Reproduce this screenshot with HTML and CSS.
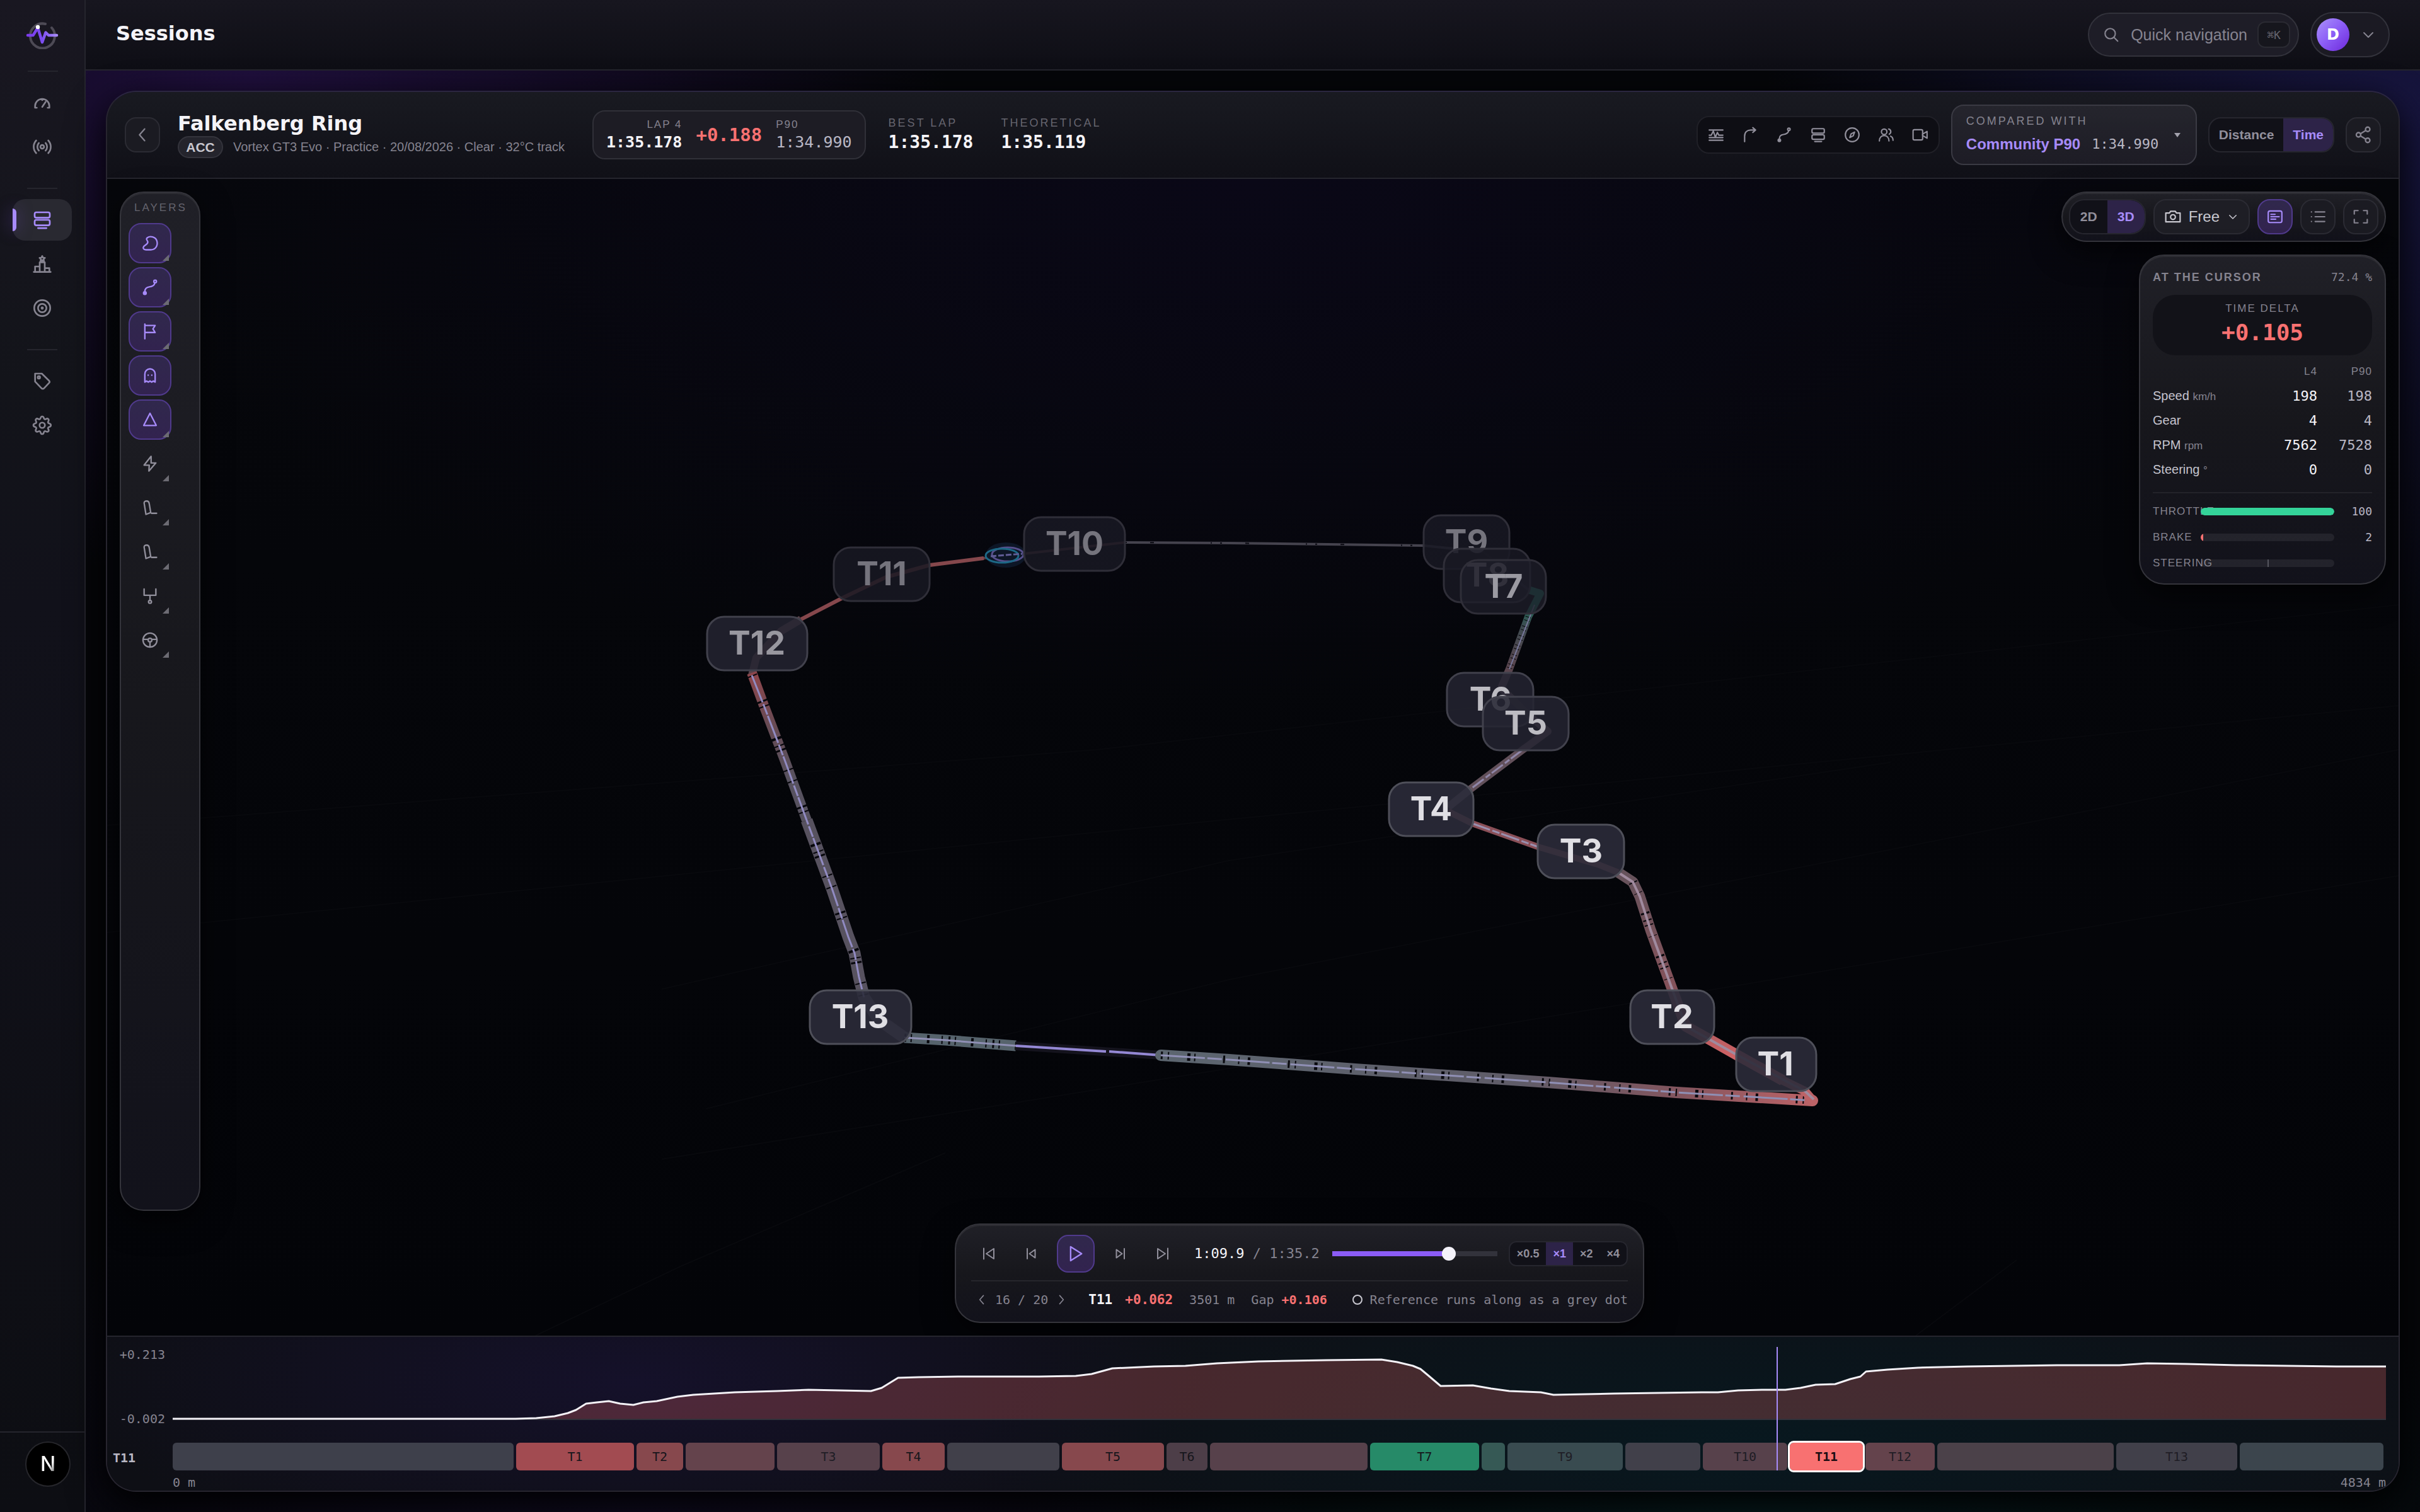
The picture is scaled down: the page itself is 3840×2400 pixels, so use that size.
FILE: index.html
```html
<!DOCTYPE html>
<html lang="en">
<head>
  <meta charset="UTF-8">
  <meta name="viewport" content="width=device-width, initial-scale=1.0">
  <title>Sessions - Falkenberg Ring</title>
  <link rel="stylesheet" href="styles.css">
</head>
<body>
  <!-- Shared icons -->
  <svg class="sprite" aria-hidden="true">
    <symbol id="i-stack" viewBox="0 0 24 24"><rect x="3" y="3" width="18" height="6.500" rx="2"/><rect x="3" y="12" width="18" height="6.500" rx="2"/><path d="M7 21.800h10"/></symbol>
    <symbol id="i-line" viewBox="0 0 24 24"><circle cx="5" cy="20" r="1.800" fill="currentColor"/><circle cx="19" cy="4" r="1.800"/><path d="M5 18c0-4 2-6 6-6.500s7-1.500 7.600-5.500"/></symbol>
    <symbol id="i-pedal" viewBox="0 0 24 24"><path d="M4 5.500C4 3.500 5.500 2.800 7.500 2.800S10.600 4 10.900 6L13 18.500 6.500 21z"/><path d="M14 19.500h7"/></symbol>
    <symbol id="i-down" viewBox="0 0 24 24"><path d="m5 9 7 7 7-7"/></symbol>
    <symbol id="i-left" viewBox="0 0 24 24"><path d="m15 4-7 8 7 8"/></symbol>
    <symbol id="i-right" viewBox="0 0 24 24"><path d="m9 4 7 8-7 8"/></symbol>
  </svg>

  <div class="app">
    <aside class="sidebar">
      <a class="logo" href="#" aria-label="Home">
        <svg viewBox="0 0 52 44" fill="none" stroke-linecap="round" stroke-linejoin="round">
          <defs><linearGradient id="pulse"><stop offset="0" stop-color="#7c3aed"/><stop offset="0.500" stop-color="#7c4df0"/><stop offset="1" stop-color="#a78bfa"/></linearGradient></defs>
          <path d="M31 4A19.500 19.500 0 1 0 41 10" stroke="#4d4a55" stroke-width="4"/>
          <path d="M3 22h8.500L19 10l7 23 5.500-15.500L36 22h13" stroke="url(#pulse)" stroke-width="4.500"/>
          <circle cx="19" cy="9" r="3.200" fill="#fff"/>
        </svg>
      </a>
      <nav class="nav">
        <a class="nav-item" href="#" aria-label="Dashboard"><svg class="icon" viewBox="0 0 24 24"><path d="M3.500 18v-2a8.500 8.500 0 0 1 17 0v2M3.500 18h2M20.500 18h-2M12 17l4-6M12 7.500V9"/></svg></a>
        <a class="nav-item" href="#" aria-label="Live"><svg class="icon" viewBox="0 0 24 24"><circle cx="12" cy="12" r="2.200"/><path d="M8 7.500a6.500 6.500 0 0 0 0 9M16 7.500a6.500 6.500 0 0 1 0 9M4.800 4.500a11 11 0 0 0 0 15M19.200 4.500a11 11 0 0 1 0 15"/></svg></a>
        <hr>
        <a class="nav-item active" href="#" aria-label="Sessions"><svg class="icon"><use href="#i-stack"/></svg></a>
        <a class="nav-item" href="#" aria-label="Leaderboard"><svg class="icon" viewBox="0 0 24 24"><path d="M2 21.500h20M3.500 21.500V15H9M9 21.500V10h6v11.500M15 17h5.500v4.500"/><path d="m12 2.500 1 2 2.200.300-1.600 1.500.400 2.200-2-1-2 1 .400-2.200-1.600-1.500 2.200-.300z"/></svg></a>
        <a class="nav-item" href="#" aria-label="Targets"><svg class="icon" viewBox="0 0 24 24"><circle cx="12" cy="12" r="9.500"/><circle cx="12" cy="12" r="5"/><circle cx="12" cy="12" r="0.800"/></svg></a>
        <hr>
        <a class="nav-item" href="#" aria-label="Setups"><svg class="icon" viewBox="0 0 24 24"><path d="M3.500 3h8l8.600 8.400a2 2 0 0 1 0 2.800l-6 6.300a2 2 0 0 1-2.900 0L3.500 12.500z"/><circle cx="8" cy="7.500" r="1.400"/></svg></a>
        <a class="nav-item" href="#" aria-label="Settings"><svg class="icon" viewBox="0 0 24 24"><circle cx="12" cy="12" r="3.200"/><path d="M12 1.500c1.600 0 1.700 1 2 2.200.300 1.100 1.300 1.500 2.200 1 1.100-.600 1.900-1.200 3-.100s.500 1.900-.100 3c-.500.900-.100 1.900 1 2.200 1.200.300 2.200.600 2.200 2.200s-1 1.800-2.200 2.100c-1.100.300-1.500 1.300-1 2.200.600 1.100 1.200 1.900.1 3s-1.900.5-3-.1c-.9-.5-1.900-.1-2.200 1-.3 1.200-.4 2.300-2 2.300s-1.800-1.100-2.100-2.300c-.3-1.100-1.300-1.500-2.200-1-1.100.6-1.900 1.200-3 .1s-.5-1.900.1-3c.5-.9.1-1.900-1-2.200C2.600 13.800 1.500 13.600 1.500 12s1.100-1.900 2.300-2.200c1.100-.3 1.500-1.300 1-2.200-.6-1.100-1.200-1.900-.1-3s1.900-.5 3 .1c.9.500 1.900.1 2.200-1 .3-1.200.5-2.200 2.100-2.200z"/></svg></a>
      </nav>
      <div class="sidebar-foot">
        <button class="dev-badge" aria-label="Developer tools"><span>N</span></button>
      </div>
    </aside>

    <div class="main">
      <header class="topbar">
        <h1>Sessions</h1>
        <div class="topbar-tools">
          <button class="search">
            <svg class="icon" viewBox="0 0 24 24"><circle cx="10.500" cy="10.500" r="7.500"/><path d="m16 16 5.500 5.500"/></svg>
            <span>Quick navigation</span>
            <kbd>⌘K</kbd>
          </button>
          <button class="account" aria-label="Account">
            <span class="avatar">D</span>
            <svg class="icon"><use href="#i-down"/></svg>
          </button>
        </div>
      </header>

      <main class="content">
        <section class="panel">
          <div class="session-bar">
            <button class="square-btn" aria-label="Back"><svg class="icon"><use href="#i-left"/></svg></button>
            <div class="session">
              <h2>Falkenberg Ring</h2>
              <p><span class="tag">ACC</span>Vortex GT3 Evo · Practice · 20/08/2026 · Clear · 32°C track</p>
            </div>
            <div class="lap-card">
              <div class="lap own"><span>LAP 4</span><b>1:35.178</b></div>
              <b class="lap-delta">+0.188</b>
              <div class="lap"><span>P90</span><em>1:34.990</em></div>
            </div>
            <div class="stat"><span class="label">BEST LAP</span><b>1:35.178</b></div>
            <div class="stat"><span class="label">THEORETICAL</span><b>1:35.119</b></div>

            <div class="session-tools">
              <div class="tabs">
                <button aria-label="Traces"><svg class="icon" viewBox="0 0 24 24"><path d="M2 5h20M2 20h20M2 12.500h3l3-6 3 9 3-7 2 4h6M2 16h20"/></svg></button>
                <button aria-label="Corners"><svg class="icon" viewBox="0 0 24 24"><path d="M4 22V14C4 8 8 5 13 5h7M16 1.500 20 5l-4 3.500"/></svg></button>
                <button aria-label="Racing line"><svg class="icon"><use href="#i-line"/></svg></button>
                <button aria-label="Laps"><svg class="icon"><use href="#i-stack"/></svg></button>
                <button aria-label="Explore"><svg class="icon" viewBox="0 0 24 24"><circle cx="12" cy="12" r="10"/><path d="m15.500 8-2 5.500L8.500 16l2-5.500z"/></svg></button>
                <button aria-label="Drivers"><svg class="icon" viewBox="0 0 24 24"><circle cx="9" cy="7.500" r="4"/><path d="M2 21c0-5 3-8 7-8s7 3 7 8M15.500 3.500a4 4 0 0 1 1 7.500M18.500 14c2.500 1 3.500 3.500 3.500 6"/></svg></button>
                <button aria-label="Video"><svg class="icon" viewBox="0 0 24 24"><rect x="1.500" y="4.500" width="14" height="15" rx="2"/><path d="m15.500 11 6.500-4v10l-6.500-4z"/></svg></button>
              </div>
              <button class="compare">
                <span class="compare-text">
                  <span class="label">COMPARED WITH</span>
                  <span class="compare-value"><b>Community P90</b><em>1:34.990</em></span>
                </span>
                <i class="caret"></i>
              </button>
              <div class="segmented">
                <button>Distance</button>
                <button class="on">Time</button>
              </div>
              <button class="square-btn" aria-label="Share"><svg class="icon" viewBox="0 0 24 24"><circle cx="18" cy="4.500" r="3"/><circle cx="5.500" cy="12" r="3"/><circle cx="18" cy="19.500" r="3"/><path d="m8.200 10.500 7-4.300M8.200 13.500l7 4.300"/></svg></button>
            </div>
          </div>

          <div class="viewer">
            <!-- Track scene -->
            <svg class="scene" viewBox="170 284 3636 1836" preserveAspectRatio="xMidYMid slice" fill="none" stroke-linejoin="round">
              <defs>
                <linearGradient id="g-left" gradientUnits="userSpaceOnUse" x1="0" y1="1070" x2="0" y2="1240"><stop offset="0" stop-color="#8c464c"/><stop offset="0.500" stop-color="#664b54"/><stop offset="1" stop-color="#57525f"/></linearGradient>
                <linearGradient id="g-bottom" gradientUnits="userSpaceOnUse" x1="1840" y1="0" x2="2880" y2="0"><stop offset="0" stop-color="#5c6670"/><stop offset="0.550" stop-color="#5f5c68"/><stop offset="0.800" stop-color="#84555e"/><stop offset="1" stop-color="#bd6367"/></linearGradient>
                <linearGradient id="g-right" gradientUnits="userSpaceOnUse" x1="0" y1="1390" x2="0" y2="1690"><stop offset="0" stop-color="#66525b"/><stop offset="0.600" stop-color="#85525a"/><stop offset="1" stop-color="#d86466"/></linearGradient>
                <linearGradient id="g-t7" gradientUnits="userSpaceOnUse" x1="0" y1="960" x2="0" y2="1060"><stop offset="0" stop-color="#1e6a56"/><stop offset="0.350" stop-color="#3e4a50"/><stop offset="1" stop-color="#59454e"/></linearGradient>
              </defs>
              <g stroke="#08090d" stroke-width="2">
                <path d="M170 1310 1740 1190 3806 960M170 1480 1650 1330 3806 1120M1050 1570 1950 1366 3000 1210M1120 1760 1950 1555 3806 1190M1050 1840 2300 1640 3806 1390M850 2120 1080 2010 1500 1830M3040 2120 3200 2000"/>
              </g>

              <path d="M1785 861 1950 862 2259 866 2354 876 2425 936" stroke="#45434e" stroke-width="4"/>
              <path d="M1785 861 1950 862 2259 866" stroke="#0a0a12" stroke-width="2" stroke-dasharray="3 37 6 90 2 13"/>
              <path d="M1475 897 1561 886 1624 879 1704 870 1785 861" stroke="#5b3b44" stroke-width="4"/>
              <path d="M1561 886 1475 897 1406 916 1337 949 1271 983" stroke="#85474c" stroke-width="6"/>
              <path d="M1271 983 1239 1002 1200 1044 1193 1072" stroke="#5a434c" stroke-width="12"/>
              <path d="M1193 1068 1211 1117 1245 1206 1280 1302" stroke="url(#g-left)" stroke-width="16"/>
              <path d="M1280 1302 1320 1410 1346 1487 1356 1513 1363 1551 1371 1583 1394 1618 1435 1647" stroke="#57525f" stroke-width="19"/>
              <path d="M1193 1072 1211 1117 1245 1206 1280 1302 1320 1410 1346 1487 1356 1513 1363 1551 1371 1583" stroke="#07070c" stroke-width="17" stroke-dasharray="2 41 3 6 2 52 4 9 2 5 3 31 2 17"/>
              <path d="M1193 1072 1211 1117 1245 1206 1280 1302 1320 1410 1346 1487 1356 1513 1363 1551 1371 1583" stroke="#918bc2" stroke-width="3" stroke-dasharray="46 3 18 2"/>

              <path d="M1435 1647 1500 1651 1612 1660" stroke="#56636c" stroke-width="17"/>
              <path d="M1435 1647 1500 1651 1612 1660" stroke="#07070c" stroke-width="13" stroke-dasharray="3 7 2 24 4 19 2 9"/>
              <path d="M1612 1660 1842 1675" stroke="#14131d" stroke-width="14"/>
              <path d="M1435 1647 1500 1651 1612 1660" stroke="#8f8fb4" stroke-width="3"/>
              <path d="M1612 1660 1755 1669M1760 1669 1842 1675" stroke="#9488d4" stroke-width="4"/>
              <path d="M1842 1675 1950 1682 2150 1697 2456 1718 2660 1734 2876 1747" stroke="url(#g-bottom)" stroke-width="18" stroke-linecap="round"/>
              <path d="M1842 1675 1950 1682 2150 1697 2456 1718 2660 1734 2878 1747" stroke="#07070c" stroke-width="12" stroke-dasharray="3 8 2 29 5 6 2 44 3 21 2 13 4 60"/>
              <path d="M1842 1675 1950 1682 2150 1697 2456 1718 2660 1734 2878 1747" stroke="#8f8fb4" stroke-width="3" stroke-dasharray="70 4 23 6"/>

              <path d="M2425 936 2444 942 2425 979 2395 1062 2382 1092" stroke="url(#g-t7)" stroke-width="12"/>
              <path d="M2425 979 2395 1062" stroke="#07070c" stroke-width="9" stroke-dasharray="1 5 1 9"/>
              <path d="M2435 960 2395 1062" stroke="#77779a" stroke-width="2"/>
              <path d="M2382 1092 2420 1130 2456 1161 2415 1191 2334 1252 2298 1281" stroke="#62505a" stroke-width="12"/>
              <path d="M2415 1191 2334 1252" stroke="#8f86a8" stroke-width="3" stroke-dasharray="22 3 9 4"/>
              <path d="M2298 1288 2336 1307 2440 1344 2538 1373 2568 1385" stroke="#8a4f57" stroke-width="10"/>
              <path d="M2336 1307 2440 1344" stroke="#9a90b0" stroke-width="3" stroke-dasharray="30 4 12 3"/>
              <path d="M2568 1385 2591 1400 2602 1423 2619 1476 2653 1569 2675 1629 2711 1649 2757 1675 2829 1715" stroke="url(#g-right)" stroke-width="17"/>
              <path d="M2829 1715 2864 1732 2876 1746" stroke="#bd6367" stroke-width="14" stroke-linecap="round"/>
              <path d="M2591 1400 2602 1423 2619 1476 2653 1569" stroke="#07070c" stroke-width="14" stroke-dasharray="2 17 1 32 3 9 2 6"/>
              <path d="M2568 1385 2591 1400 2602 1423 2619 1476 2653 1569 2675 1629 2711 1649 2757 1675 2864 1732 2878 1745" stroke="#a08a9e" stroke-width="4"/>

              <!-- Car and reference rings -->
              <ellipse cx="1596" cy="881" rx="32" ry="20" fill="#0d1626"/>
              <ellipse cx="1599" cy="880" rx="25" ry="11" stroke="#574f8c" stroke-width="3"/>
              <ellipse cx="1590" cy="882" rx="26" ry="11" stroke="#1d6886" stroke-width="3"/>
              <path d="M1572 883 1622 879" stroke="#5f5c94" stroke-width="3" stroke-dasharray="9 3"/>

              <g class="pins">
                <g class="far"><rect x="2259" y="818" width="136" height="85" rx="27"/><text x="2327" y="878">T9</text></g>
                <g class="far"><rect x="1625" y="821" width="160" height="85" rx="27"/><text x="1705" y="881">T10</text></g>
                <g class="far"><rect x="1323" y="869" width="152" height="85" rx="27"/><text x="1399" y="929">T11</text></g>
                <g class="far"><rect x="2291" y="871" width="137" height="85" rx="27"/><text x="2360" y="931">T8</text></g>
                <g class="far t7"><rect x="2318" y="889" width="135" height="85" rx="27"/><text x="2386" y="949">T7</text></g>
                <g class="mid t12"><rect x="1122" y="979" width="159" height="85" rx="27"/><text x="1201" y="1039">T12</text></g>
                <g class="mid"><rect x="2296" y="1068" width="137" height="85" rx="27"/><text x="2365" y="1128">T6</text></g>
                <g class="mid"><rect x="2353" y="1106" width="136" height="85" rx="27"/><text x="2421" y="1166">T5</text></g>
                <g class="near"><rect x="2204" y="1242" width="134" height="85" rx="27"/><text x="2271" y="1302">T4</text></g>
                <g class="near"><rect x="2440" y="1309" width="137" height="85" rx="27"/><text x="2509" y="1369">T3</text></g>
                <g class="near"><rect x="1285" y="1572" width="161" height="85" rx="27"/><text x="1365" y="1632">T13</text></g>
                <g class="near"><rect x="2587" y="1572" width="133" height="85" rx="27"/><text x="2653" y="1632">T2</text></g>
                <g class="near"><rect x="2755" y="1647" width="127" height="85" rx="27"/><text x="2817" y="1707">T1</text></g>
              </g>
            </svg>

            <div class="layers glass">
              <span class="label">LAYERS</span>
              <button class="layer on" aria-label="Track"><svg class="icon" viewBox="0 0 24 24"><path d="M8.500 4.500C12 2 20 3 21.500 9.500 23 16 19 21 13 21H6.500C3 21 2 18.500 3.500 16.500 5.500 14 9.500 13.500 9 10 8.700 8 5.500 7 8.500 4.500z"/></svg></button>
              <button class="layer on" aria-label="Racing line"><svg class="icon"><use href="#i-line"/></svg></button>
              <button class="layer on" aria-label="Corners"><svg class="icon" viewBox="0 0 24 24"><path d="M5 2v20M5 4h14l-3 4.700 3 4.800H5"/></svg></button>
              <button class="layer plain on" aria-label="Ghost"><svg class="icon" viewBox="0 0 24 24"><path d="M5 21V10a7 7 0 0 1 14 0v11l-2.400-1.500-2.300 1.500-2.300-1.500L9.700 21l-2.400-1.500z"/><path d="M9.500 11.500v.100M14.500 11.500v.100"/></svg></button>
              <button class="layer on" aria-label="Apex"><svg class="icon" viewBox="0 0 24 24"><path d="M12 3.500 20.500 20h-17z"/></svg></button>
              <button class="layer" aria-label="Energy"><svg class="icon" viewBox="0 0 24 24"><path d="M13.500 2 4 14h7l-.500 8L20 11h-6.500z"/></svg></button>
              <button class="layer" aria-label="Throttle"><svg class="icon"><use href="#i-pedal"/></svg></button>
              <button class="layer" aria-label="Brake"><svg class="icon"><use href="#i-pedal"/></svg></button>
              <button class="layer" aria-label="Gear"><svg class="icon" viewBox="0 0 24 24"><path d="M4 2.500V11h16V2.500M12 11v7"/><circle cx="12" cy="20" r="2"/></svg></button>
              <button class="layer" aria-label="Steering"><svg class="icon" viewBox="0 0 24 24"><circle cx="12" cy="12" r="9.500"/><circle cx="12" cy="12" r="2.500"/><path d="M2.500 11h7M14.500 11h7M12 14.500v7"/></svg></button>
            </div>

            <div class="side">
              <div class="view-bar glass">
                <div class="segmented">
                  <button>2D</button>
                  <button class="on">3D</button>
                </div>
                <button class="camera">
                  <svg class="icon" viewBox="0 0 24 24"><path d="M1.500 6.500H7L8.500 4h7L17 6.500h5.500v13h-21z"/><circle cx="12" cy="12.500" r="3.500"/></svg>
                  Free
                  <svg class="icon small"><use href="#i-down"/></svg>
                </button>
                <button class="square-btn on" aria-label="Readout"><svg class="icon" viewBox="0 0 24 24"><rect x="2" y="3.500" width="20" height="17" rx="2.500"/><path d="M6 8.500h6M6 12h12M6 15.500h7"/></svg></button>
                <button class="square-btn" aria-label="List"><svg class="icon" viewBox="0 0 24 24"><path d="M8 5h14M8 12h14M8 19h14M2.500 5h.100M2.500 12h.100M2.500 19h.100"/></svg></button>
                <button class="square-btn" aria-label="Fullscreen"><svg class="icon" viewBox="0 0 24 24"><path d="M2.500 8V3H8M16 3h5.500v5M21.500 16v5H16M8 21H2.500v-5"/></svg></button>
              </div>

              <div class="readout glass">
                <div class="readout-head"><h3>AT THE CURSOR</h3><span>72.4 %</span></div>
                <div class="delta-box"><span class="label">TIME DELTA</span><b>+0.105</b></div>
                <table>
                  <thead><tr><th></th><th>L4</th><th>P90</th></tr></thead>
                  <tbody>
                    <tr><th>Speed <small>km/h</small></th><td>198</td><td>198</td></tr>
                    <tr><th>Gear</th><td>4</td><td>4</td></tr>
                    <tr><th>RPM <small>rpm</small></th><td>7562</td><td>7528</td></tr>
                    <tr><th>Steering <small>°</small></th><td>0</td><td>0</td></tr>
                  </tbody>
                </table>
                <div class="inputs">
                  <div class="input-row"><span>THROTTLE</span><div class="bar"><i class="green" style="width: 100%"></i></div><em>100</em></div>
                  <div class="input-row"><span>BRAKE</span><div class="bar"><i class="red" style="width: 2%"></i></div><em>2</em></div>
                  <div class="input-row"><span>STEERING</span><div class="bar centered"></div></div>
                </div>
              </div>
            </div>

            <div class="player glass">
              <div class="player-row">
                <div class="transport">
                  <button aria-label="Start"><svg class="icon" viewBox="0 0 24 24"><path d="M4 3.500v17M20 4v16L8 12z"/></svg></button>
                  <button aria-label="Step back"><svg class="icon" viewBox="0 0 24 24"><path d="M5 4v16M17.500 5.500v13L8.500 12z"/></svg></button>
                  <button class="play" aria-label="Play"><svg class="icon" viewBox="0 0 24 24"><path d="M5 2.500 20 12 5 21.500z"/></svg></button>
                  <button aria-label="Step forward"><svg class="icon" viewBox="0 0 24 24"><path d="M19 4v16M6.500 5.500v13l9-6.500z"/></svg></button>
                  <button aria-label="End"><svg class="icon" viewBox="0 0 24 24"><path d="M20 3.500v17M4 4v16l12-8z"/></svg></button>
                </div>
                <span class="clock"><b>1:09.9</b> / 1:35.2</span>
                <input class="scrub" type="range" min="0" max="100" step="0.1" value="72.4" aria-label="Position">
                <div class="segmented speed">
                  <button>×0.5</button>
                  <button class="on">×1</button>
                  <button>×2</button>
                  <button>×4</button>
                </div>
              </div>
              <div class="player-row info">
                <div class="pager">
                  <button aria-label="Previous"><svg class="icon"><use href="#i-left"/></svg></button>
                  <span>16 / 20</span>
                  <button aria-label="Next"><svg class="icon"><use href="#i-right"/></svg></button>
                </div>
                <div class="corner"><b>T11</b><b class="loss">+0.062</b></div>
                <span>3501 m</span>
                <span>Gap <b class="loss">+0.106</b></span>
                <span class="note"><i></i>Reference runs along as a grey dot</span>
              </div>
            </div>
          </div>

          <div class="timeline">
            <div class="axis"><span>+0.213</span><span>-0.002</span></div>
            <svg class="chart" viewBox="274 2138 3512 120" preserveAspectRatio="none" fill="none">
              <path fill="#f87171" fill-opacity="0.250" d="M818 2252 851 2251 880 2248 901 2243 914 2238 930 2228 947 2226 966 2224 984 2228 1005 2230 1021 2226 1042 2224 1075 2217 1100 2214 1166 2210 1233 2208 1283 2206 1382 2208 1399 2203 1425 2187 1458 2186 1520 2185 1649 2185 1707 2184 1732 2181 1765 2172 1831 2169 1881 2168 1931 2164 1997 2161 2105 2159 2192 2158 2217 2162 2242 2168 2254 2173 2266 2183 2286 2200 2337 2199 2366 2204 2395 2208 2445 2210 2465 2214 2561 2212 2700 2210 2726 2210 2758 2207 2798 2206 2833 2206 2857 2203 2881 2198 2912 2197 2936 2189 2952 2185 2961 2177 2995 2174 3043 2171 3122 2169 3264 2167 3363 2167 3407 2164 3470 2165 3549 2167 3707 2169 3786 2169V2253H818z"/>
              <path stroke="#32323b" stroke-width="2" d="M274 2253H3786"/>
              <path stroke="#f4f2f7" stroke-width="3" stroke-linejoin="round" d="M274 2252H818L851 2251 880 2248 901 2243 914 2238 930 2228 947 2226 966 2224 984 2228 1005 2230 1021 2226 1042 2224 1075 2217 1100 2214 1166 2210 1233 2208 1283 2206 1382 2208 1399 2203 1425 2187 1458 2186 1520 2185 1649 2185 1707 2184 1732 2181 1765 2172 1831 2169 1881 2168 1931 2164 1997 2161 2105 2159 2192 2158 2217 2162 2242 2168 2254 2173 2266 2183 2286 2200 2337 2199 2366 2204 2395 2208 2445 2210 2465 2214 2561 2212 2700 2210 2726 2210 2758 2207 2798 2206 2833 2206 2857 2203 2881 2198 2912 2197 2936 2189 2952 2185 2961 2177 2995 2174 3043 2171 3122 2169 3264 2167 3363 2167 3407 2164 3470 2165 3549 2167 3707 2169 3786 2169"/>
            </svg>
            <b class="current">T11</b>
            <div class="segments">
              <button class="flat" style="flex-grow: 541"></button>
              <button class="loss-4" style="flex-grow: 187">T1</button>
              <button class="loss-3" style="flex-grow: 74">T2</button>
              <button class="loss-2" style="flex-grow: 141"></button>
              <button class="loss-1" style="flex-grow: 163">T3</button>
              <button class="loss-3" style="flex-grow: 99">T4</button>
              <button class="even" style="flex-grow: 178"></button>
              <button class="loss-3" style="flex-grow: 162">T5</button>
              <button class="loss-0" style="flex-grow: 65">T6</button>
              <button class="loss-1" style="flex-grow: 250"></button>
              <button class="gain-4" style="flex-grow: 173">T7</button>
              <button class="gain-2" style="flex-grow: 37"></button>
              <button class="gain-1" style="flex-grow: 183">T9</button>
              <button class="even" style="flex-grow: 119"></button>
              <button class="loss-1" style="flex-grow: 134">T10</button>
              <button class="selected" style="flex-grow: 116">T11</button>
              <button class="loss-2" style="flex-grow: 110">T12</button>
              <button class="warm" style="flex-grow: 280"></button>
              <button class="even" style="flex-grow: 192">T13</button>
              <button class="gain-0" style="flex-grow: 228"></button>
            </div>
            <div class="distance"><span>0 m</span><span>4834 m</span></div>
            <div class="cursor"><i style="left: 72.460%"></i></div>
          </div>
        </section>
      </main>
    </div>
  </div>
</body>
</html>
```
FILE: styles.css
```css
:root {
  --line: #25252d;
  --muted: #85838f;
  --dim: #65646e;
  --text: #f5f4f8;
  --soft: #b9b7c4;
  --violet: #a78bfa;
  --red: #f87171;
  --sans: "Liberation Sans", Arial, sans-serif;
  --wide: "DejaVu Sans", Verdana, sans-serif;
  --mono: "DejaVu Sans Mono", "Liberation Mono", monospace;
}
* {
  box-sizing: border-box;
}
body {
  margin: 0;
  font-family: var(--sans);
  font-size: 22px;
  color: var(--text);
  background-color: #050609;
  background-image:
    radial-gradient(ellipse 1100px 800px at 400px 120px, #1f0f3c, transparent),
    radial-gradient(ellipse 1000px 900px at 3800px 180px, #17153f, transparent),
    radial-gradient(ellipse 1100px 500px at 1000px 2300px, #110c24, transparent),
    radial-gradient(ellipse 1200px 500px at 2800px 2400px, #061a1d, transparent);
}
button {
  font: inherit;
  color: inherit;
  padding: 0;
  border: none;
  background: none;
  cursor: pointer;
  display: flex;
  align-items: center;
  justify-content: center;
}
h1, h2, h3, p {
  margin: 0;
}
em {
  font-style: normal;
}
.sprite {
  display: none;
}
.icon {
  width: 28px;
  height: 28px;
  flex: none;
  fill: none;
  stroke: currentColor;
  stroke-width: 2;
  stroke-linecap: round;
  stroke-linejoin: round;
}
.label {
  font-size: 17px;
  line-height: 20px;
  letter-spacing: 3px;
  color: var(--dim);
}
.app {
  display: flex;
  height: 100vh;
}

/* Sidebar */
.sidebar {
  width: 136px;
  flex: none;
  display: flex;
  flex-direction: column;
  border-right: 2px solid var(--line);
  background: linear-gradient(#191721, #13141a 25%, #11111a 40%, #0d0e13);
}
.logo {
  height: 112px;
  display: flex;
  align-items: center;
  justify-content: center;
}
.logo svg {
  width: 52px;
  height: 44px;
}
.nav {
  flex: 1;
  display: flex;
  flex-direction: column;
  gap: 4px;
  padding: 18px 20px;
  position: relative;
}
.nav::before {
  content: "";
  position: absolute;
  top: 0;
  left: 44px;
  width: 48px;
  height: 2px;
  background: var(--line);
}
.nav hr {
  width: 48px;
  height: 2px;
  margin: 28px auto 12px;
  border: none;
  background: var(--line);
}
.nav-item {
  height: 66px;
  display: flex;
  align-items: center;
  justify-content: center;
  border-radius: 20px;
  color: var(--muted);
  position: relative;
}
.nav-item .icon {
  width: 32px;
  height: 32px;
}
.nav-item.active {
  color: var(--violet);
  background: #292931;
}
.nav-item.active::before {
  content: "";
  position: absolute;
  left: 0;
  top: 15px;
  width: 6px;
  height: 36px;
  border-radius: 0 6px 6px 0;
  background: var(--violet);
  box-shadow: 0 0 24px #8b5cf680;
}
.sidebar-foot {
  height: 128px;
  padding: 14px 0 0 40px;
  border-top: 2px solid var(--line);
}
.dev-badge {
  width: 72px;
  height: 72px;
  border: 2px solid #26262b;
  border-radius: 50%;
  background: #000;
  font: 500 32px/36px Inter, sans-serif;
}
.dev-badge span {
  background: linear-gradient(135deg, #fff 55%, #555);
  background-clip: text;
  color: transparent;
}

/* Top bar */
.main {
  flex: 1;
  min-width: 0;
  display: flex;
  flex-direction: column;
}
.topbar {
  height: 112px;
  padding: 0 48px;
  display: flex;
  align-items: center;
  justify-content: space-between;
  border-bottom: 2px solid var(--line);
  background: linear-gradient(#17161f, #0e0e15);
}
h1, h2 {
  font: bold 32px/40px var(--wide);
}
h1 {
  padding-bottom: 4px;
}
.topbar-tools {
  display: flex;
  align-items: center;
  gap: 18px;
}
.search {
  height: 70px;
  padding: 0 12px 0 22px;
  border: 2px solid #32323b;
  border-radius: 36px;
  background: #1e1d27;
  color: var(--muted);
  font-size: 25px;
}
.search .icon {
  width: 26px;
  height: 26px;
  margin-right: 18px;
}
.search kbd {
  display: flex;
  align-items: center;
  justify-content: center;
  width: 52px;
  height: 42px;
  margin-left: 16px;
  border: 2px solid #2a2a32;
  border-radius: 12px;
  background: #16161d;
  color: var(--dim);
  font: 18px var(--mono);
}
.account {
  height: 72px;
  padding: 0 20px 0 8px;
  gap: 18px;
  border: 2px solid #32323b;
  border-radius: 36px;
  background: #1b1a23;
  color: var(--muted);
}
.account .icon {
  width: 24px;
  height: 24px;
}
.avatar {
  width: 52px;
  height: 52px;
  line-height: 52px;
  border-radius: 50%;
  background: linear-gradient(135deg, #ab93fb, #8b5cf6 50%, #6d28d9);
  color: #fff;
  font-family: var(--wide);
  font-size: 24px;
  font-weight: bold;
}

/* Panel */
.content {
  flex: 1;
  min-height: 0;
  padding: 32px;
  display: flex;
}
.panel {
  flex: 1;
  min-width: 0;
  display: flex;
  flex-direction: column;
  border: 2px solid #27252f;
  border-top-color: #2b2640;
  border-radius: 48px;
  overflow: hidden;
  box-shadow: 0 20px 60px #000;
}
.session-bar {
  height: 138px;
  flex: none;
  padding: 0 28px;
  display: flex;
  align-items: center;
  border-bottom: 2px solid var(--line);
  background: linear-gradient(#191a21, #101017);
}
.square-btn {
  width: 56px;
  height: 56px;
  border: 2px solid #2b2b33;
  border-radius: 18px;
  background: #1b1b22;
  color: var(--muted);
}
.session {
  margin-left: 28px;
  padding-bottom: 2px;
}
.session p {
  display: flex;
  align-items: center;
  font-size: 20px;
  line-height: 34px;
  color: var(--muted);
}
.tag {
  width: 72px;
  margin-right: 16px;
  border: 2px solid #34343c;
  border-radius: 18px;
  background: #24242c;
  color: #c9c8d0;
  font-size: 21px;
  font-weight: bold;
  line-height: 31px;
  text-align: center;
}
.lap-card {
  height: 78px;
  margin-left: 44px;
  padding: 0 20px;
  display: flex;
  align-items: center;
  gap: 22px;
  border: 2px solid #303038;
  border-radius: 20px;
  background: #1d1c24;
}
.lap {
  display: flex;
  flex-direction: column;
  font: 25px/32px var(--mono);
  color: var(--soft);
}
.lap span {
  font: 17px/24px var(--sans);
  letter-spacing: 2px;
  color: var(--muted);
}
.lap.own {
  align-items: flex-end;
  color: var(--text);
}
.lap-delta {
  font: bold 29px/36px var(--mono);
  color: var(--red);
}
.stat {
  margin-left: 36px;
  display: flex;
  flex-direction: column;
  font: 28px/38px var(--mono);
}
.stat + .stat {
  margin-left: 44px;
}
.session-bar .label {
  font-family: var(--sans);
  font-size: 18px;
  line-height: 24px;
}
.session-tools {
  margin-left: auto;
  display: flex;
  align-items: center;
  gap: 18px;
}
.tabs {
  height: 60px;
  padding: 0 2px;
  display: flex;
  border: 2px solid #202027;
  border-radius: 20px;
  background: #0e0e14;
  color: #918f9b;
}
.tabs button {
  width: 54px;
}
.tabs .icon {
  width: 26px;
  height: 26px;
}
.compare {
  width: 390px;
  height: 96px;
  padding: 0 24px 0 22px;
  justify-content: space-between;
  border: 2px solid #3a3a43;
  border-radius: 20px;
  background: linear-gradient(#25252d, #1d1c25);
}
.compare-text {
  display: flex;
  flex-direction: column;
  gap: 6px;
  text-align: left;
}
.compare .label {
  color: var(--muted);
}
.compare-value {
  display: flex;
  align-items: center;
  gap: 18px;
  font: 22px/38px var(--mono);
  color: var(--soft);
}
.compare-value b {
  font: bold 24px/38px var(--sans);
  color: var(--violet);
}
.caret {
  border: 5px solid transparent;
  border-top: 7px solid #a3a2ad;
  border-bottom: none;
}
.segmented {
  height: 56px;
  display: flex;
  border: 2px solid #26262e;
  border-radius: 20px;
  overflow: hidden;
  background: #111118;
  color: #918f9b;
  font-size: 21px;
  font-weight: bold;
}
.segmented button {
  padding: 0 15px;
}
.segmented .on {
  background: #2d2348;
  color: var(--violet);
}

/* Viewer */
.viewer {
  flex: 1;
  min-height: 0;
  position: relative;
  display: flex;
  justify-content: space-between;
  align-items: flex-start;
  padding: 20px;
  background:
    radial-gradient(ellipse 50% 45% at 50% 0, #0a0817, transparent),
    linear-gradient(#06070b, #030408);
}
.scene {
  position: absolute;
  inset: 0;
  width: 100%;
  height: 100%;
}
.pins text {
  font: 700 52px Inter, sans-serif;
  text-anchor: middle;
}
.pins rect {
  stroke-width: 3;
}
.far rect {
  fill: #191823;
  fill-opacity: 0.860;
  stroke: #2f2e38;
}
.far text {
  fill: #75747d;
}
.far.t7 rect {
  fill: #1e1d29;
  fill-opacity: 0.780;
}
.far.t7 text {
  fill: #9b9aa2;
}
.mid rect {
  fill: #242431;
  fill-opacity: 0.860;
  stroke: #41414c;
}
.mid text {
  fill: #bdbcc2;
}
.mid.t12 text {
  fill: #98979f;
}
.near rect {
  fill: #2b2b3a;
  fill-opacity: 0.900;
  stroke: #4e4f59;
}
.near text {
  fill: #e0dfe4;
}
.glass {
  position: relative;
  border: 2px solid #34343b;
  background: linear-gradient(#202027, #17171c 50%, #12121b);
  box-shadow: inset 0 2px 0 #2d2d33, 0 16px 48px #000000a0;
}
.layers {
  width: 128px;
  height: calc(100% - 178px);
  padding: 14px 12px;
  display: flex;
  flex-direction: column;
  gap: 6px;
  border-radius: 38px;
}
.layers .label {
  padding-left: 9px;
  margin-bottom: 8px;
}
.layer {
  width: 68px;
  height: 64px;
  border: 2px solid transparent;
  border-radius: 20px;
  color: #918f9b;
  position: relative;
}
.layer::after {
  content: "";
  position: absolute;
  right: 2px;
  bottom: 2px;
  border-left: 10px solid transparent;
  border-bottom: 10px solid #6c6b73;
}
.layer.plain::after {
  display: none;
}
.layer.on, .square-btn.on, .play {
  border: 2px solid #503a8c;
  background: linear-gradient(#30284c, #32234f);
  color: var(--violet);
}
.side {
  display: flex;
  flex-direction: column;
  align-items: flex-end;
  gap: 20px;
}
.view-bar {
  height: 80px;
  padding: 0 10px;
  display: flex;
  align-items: center;
  gap: 12px;
  border-radius: 40px;
}
.view-bar .segmented {
  border-radius: 24px;
}
.view-bar .segmented button {
  width: 59px;
}
.view-bar .square-btn {
  border-radius: 20px;
}
.view-bar .icon {
  width: 26px;
  height: 26px;
}
.camera {
  height: 56px;
  padding: 0 16px;
  gap: 12px;
  border: 2px solid #2b2b33;
  border-radius: 20px;
  background: #1e1e25;
  color: #c9c8d0;
  font-size: 24px;
}
.view-bar .icon.small {
  width: 18px;
  height: 18px;
}
.readout {
  width: 392px;
  height: 524px;
  padding: 20px;
  border-radius: 40px;
}
.readout-head {
  display: flex;
  justify-content: space-between;
  font: 18px/28px var(--mono);
  color: var(--muted);
}
.readout-head h3 {
  font: bold 18px/28px var(--sans);
  letter-spacing: 2px;
}
.delta-box {
  height: 96px;
  margin-top: 14px;
  padding-top: 12px;
  display: flex;
  flex-direction: column;
  align-items: center;
  border-radius: 36px;
  background: #121218;
}
.delta-box .label {
  color: var(--muted);
  letter-spacing: 2px;
}
.delta-box b {
  font: bold 36px/56px var(--mono);
  color: var(--red);
}
table {
  width: 100%;
  margin-top: 6px;
  border-collapse: collapse;
  table-layout: fixed;
}
th, td {
  height: 39px;
  padding: 0;
  font-weight: normal;
  text-align: right;
}
th {
  font-size: 17px;
  letter-spacing: 1px;
  color: var(--muted);
}
th:first-child {
  width: 50%;
}
th + th, td {
  width: 25%;
}
tbody th {
  font-size: 20px;
  letter-spacing: normal;
  text-align: left;
  color: #c5c4ce;
}
small {
  font-size: 17px;
  color: var(--muted);
}
td {
  font-family: var(--mono);
  font-size: 22px;
}
td:last-child {
  color: var(--soft);
}
.inputs {
  margin-top: 16px;
  padding-top: 8px;
  border-top: 2px solid #232329;
}
.input-row {
  height: 41px;
  display: grid;
  grid-template-columns: 64px 1fr 48px;
  align-items: center;
  gap: 12px;
  font-size: 17px;
  letter-spacing: 1px;
  color: var(--muted);
}
.input-row em {
  font-family: var(--mono);
  font-size: 18px;
  letter-spacing: normal;
  text-align: right;
  color: var(--soft);
}
.bar {
  height: 12px;
  border-radius: 6px;
  overflow: hidden;
  background: #ffffff12;
  position: relative;
}
.bar i {
  display: block;
  height: 100%;
}
.green {
  background: #34d399;
  border-radius: 6px;
}
.red {
  background: var(--red);
}
.centered::after {
  content: "";
  position: absolute;
  left: 50%;
  width: 2px;
  height: 100%;
  background: #55555e;
}

/* Player */
.player {
  position: absolute;
  left: calc(50% + 74px);
  bottom: 20px;
  transform: translateX(-50%);
  width: 1094px;
  height: 158px;
  padding: 16px 24px;
  border-radius: 40px;
}
.player-row {
  display: flex;
  align-items: center;
  height: 60px;
}
.transport {
  display: flex;
  align-items: center;
  gap: 12px;
  margin-right: 22px;
  color: #918f9b;
}
.transport button {
  width: 56px;
  height: 56px;
}
.transport .icon {
  width: 24px;
  height: 24px;
}
.transport .play {
  width: 60px;
  height: 60px;
  border-radius: 18px;
}
.transport .play .icon {
  width: 28px;
  height: 28px;
}
.clock {
  font: 22px/28px var(--mono);
  color: var(--muted);
}
.clock b {
  font-weight: normal;
  color: var(--text);
}
.scrub {
  flex: 1;
  min-width: 0;
  height: 24px;
  margin: 0 18px 0 20px;
  appearance: none;
  background: linear-gradient(90deg, #8b5cf6 72%, #32323b 72%) center / 100% 8px no-repeat;
  border-radius: 4px;
}
.scrub::-webkit-slider-thumb {
  appearance: none;
  width: 22px;
  height: 22px;
  border-radius: 50%;
  background: #f4f2fa;
}
.speed {
  height: 40px;
  border-radius: 12px;
  font-size: 18px;
}
.speed button {
  padding: 0 11px;
}
.player-row.info {
  height: 62px;
  margin-top: 12px;
  padding-bottom: 2px;
  border-top: 2px solid #26262c;
  gap: 26px;
  font: 20px/28px var(--mono);
  color: var(--muted);
}
.pager {
  display: flex;
  align-items: center;
  gap: 4px;
}
.pager button {
  width: 34px;
  height: 34px;
}
.pager .icon {
  width: 20px;
  height: 20px;
}
.corner {
  display: flex;
  gap: 20px;
  font-size: 21px;
  color: var(--text);
}
.loss {
  color: var(--red);
}
.note {
  margin-left: auto;
  display: flex;
  align-items: center;
  gap: 12px;
  white-space: nowrap;
}
.note i {
  width: 16px;
  height: 16px;
  border: 2px solid #c9c8d0;
  border-radius: 50%;
}

/* Timeline */
.timeline {
  position: relative;
  height: 246px;
  flex: none;
  padding: 16px 20px 0 0;
  display: grid;
  grid-template-columns: 104px 1fr;
  grid-template-rows: 120px 32px 44px 1fr;
  border-top: 2px solid var(--line);
  background:
    radial-gradient(ellipse 25% 120% at 23% 30%, #15112a, transparent),
    radial-gradient(ellipse 35% 140% at 72% 70%, #08181f, transparent),
    #0e0f15;
  font: 20px/24px var(--mono);
  color: var(--muted);
}
.axis {
  display: flex;
  flex-direction: column;
  justify-content: space-between;
  height: 126px;
  padding-right: 12px;
  text-align: right;
}
.chart {
  width: 100%;
  height: 120px;
}
.current {
  grid-row: 3;
  padding: 12px 0 0 9px;
  line-height: 24px;
  color: var(--soft);
}
.segments {
  grid-row: 3;
  grid-column: 2;
  display: flex;
}
.segments button {
  flex: 1 1 0;
  min-width: 0;
  margin-right: 4px;
  border-radius: 6px;
  color: #15151b;
}
.segments .flat { background: #3e404b; }
.segments .even { background: #41404a; }
.segments .warm { background: #4b4149; }
.segments .loss-0 { background: #4d3e48; }
.segments .loss-1 { background: #57414b; }
.segments .loss-2 { background: #64434c; }
.segments .loss-3 { background: #87484d; }
.segments .loss-4 { background: #a24b51; }
.segments .gain-0 { background: #3c454d; }
.segments .gain-1 { background: #394b50; }
.segments .gain-2 { background: #365955; }
.segments .gain-4 { background: #268a68; }
.segments .loss-1, .segments .loss-2, .segments .even, .segments .gain-1 {
  color: #1f1d25;
}
.segments .selected {
  background: var(--red);
  color: #1c0d12;
  font-weight: bold;
  outline: 3px solid #fff;
}
.distance {
  grid-row: 4;
  grid-column: 2;
  display: flex;
  justify-content: space-between;
  padding-top: 7px;
}
.cursor {
  position: absolute;
  top: 16px;
  left: 104px;
  right: 20px;
  height: 196px;
  pointer-events: none;
}
.cursor i {
  position: absolute;
  width: 2px;
  height: 100%;
  background: var(--violet);
}
```
